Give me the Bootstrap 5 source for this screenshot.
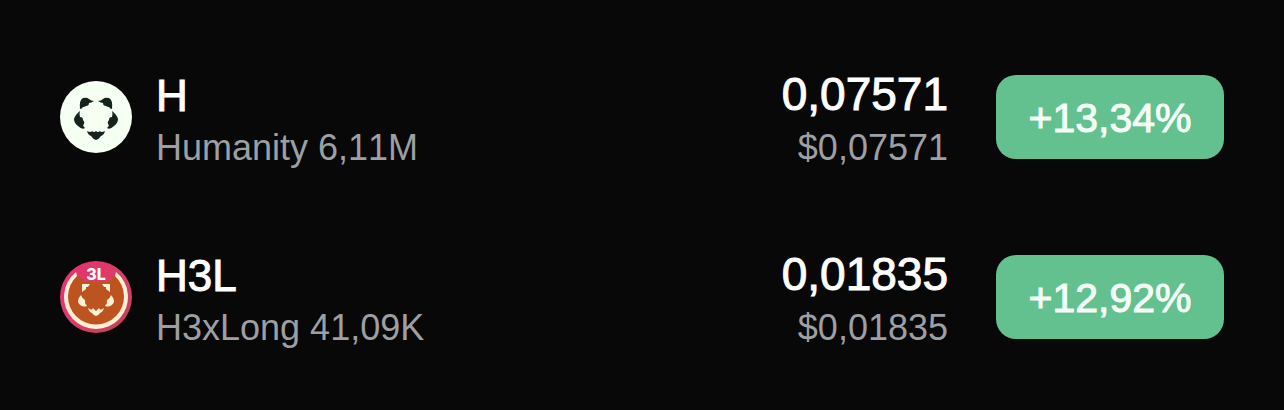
<!DOCTYPE html>
<html lang="en">
<head>
<meta charset="utf-8">
<meta name="viewport" content="width=device-width, initial-scale=1">
<title>Markets</title>
<link href="https://cdn.jsdelivr.net/npm/bootstrap@5.3.0/dist/css/bootstrap.min.css" rel="stylesheet">
<style>
body { background: #080808; font-family: "Liberation Sans", Arial, sans-serif; font-kerning: none; }
.market-list { padding: 27px 60px 0; }
.market-row { height: 180px; gap: 24px; }
.coin-logo { width: 72px; height: 72px; }
.coin-text { padding-top: 10px; }
.coin-symbol, .coin-price { color: #fff; -webkit-text-stroke: 1px #fff; }
.coin-symbol { font-size: 44px; line-height: 52px; }
.coin-price { font-size: 46px; line-height: 48px; padding-bottom: 4px; }
.coin-detail { color: #9e9fa3; font-size: 36px; line-height: 52px; }
.change-pill { width: 228px; height: 84px; margin-left: 24px; border-radius: 20px; background: #63c190; color: #f5fff8; font-size: 41px; line-height: 86px; -webkit-text-stroke: 1px #f5fff8; }
</style>
</head>
<body>
<main class="market-list">
  <div class="market-row d-flex align-items-center">
    <svg class="coin-logo flex-shrink-0" viewBox="0 0 72 72" aria-hidden="true">
      <circle cx="36" cy="36" r="36" fill="#f5fff2"/>
      <g fill="#14231b">
        <g id="half">
          <path d="M20 28Q19 19 23 17Q27 16 29 18Q31 20 34 20Q31 22 29 22Q29 25 26 25Q25 26 23 26Q22 28 20 28Z"/>
          <path d="M20 30Q19 33 20 36Q23 36 23 39Q25 41 24 43Q22 44 25 47Q22 49 18 45Q14 42 14 38Q15 34 20 30Z"/>
          <path d="M27 50Q31 52 32 50Q34 52 36 50V59Q33 58 31 55Q28 54 27 50Z"/>
        </g>
        <use href="#half" transform="matrix(-1 0 0 1 72 0)"/>
      </g>
    </svg>
    <div class="coin-text flex-grow-1">
      <div class="coin-symbol">H</div>
      <div class="coin-detail">Humanity 6,11M</div>
    </div>
    <div class="coin-text text-end">
      <div class="coin-price">0,07571</div>
      <div class="coin-detail">$0,07571</div>
    </div>
    <div class="change-pill flex-shrink-0 text-center">+13,34%</div>
  </div>
  <div class="market-row d-flex align-items-center">
    <svg class="coin-logo flex-shrink-0" viewBox="0 0 72 72" aria-hidden="true">
      <defs>
        <linearGradient id="rim" x1="0" y1="0" x2="1" y2="1">
          <stop offset="0" stop-color="#e5306f"/>
          <stop offset=".5" stop-color="#dc3d69"/>
          <stop offset="1" stop-color="#b94558"/>
        </linearGradient>
      </defs>
      <circle cx="36" cy="36" r="36" fill="url(#rim)"/>
      <path d="M17 14A30 30 0 1 0 55 14L47 21H25Z" fill="#bd5420"/>
      <path d="M16 11A32 32 0 1 0 56 11L55 15A28 28 0 1 1 17 15Z" fill="#fff0d5"/>
      <g fill="#fff0d5">
        <g id="mask">
          <path d="M22 31V23H30L28 26H26V28Z"/>
          <path d="M21 34Q22 37 24 38Q26 40 25 42L27 45Q24 46 22 45Q18 43 18 40Q18 37 21 34Z"/>
          <path d="M28 47Q32 50 33 47L36 50V55Q34 55 32 52Q29 51 28 47Z"/>
        </g>
        <use href="#mask" transform="matrix(-1 0 0 1 72 0)"/>
      </g>
      <text x="36" y="19" text-anchor="middle" font-family="Inter, sans-serif" font-size="16" font-weight="800" fill="#fff">3L</text>
    </svg>
    <div class="coin-text flex-grow-1">
      <div class="coin-symbol">H3L</div>
      <div class="coin-detail">H3xLong 41,09K</div>
    </div>
    <div class="coin-text text-end">
      <div class="coin-price">0,01835</div>
      <div class="coin-detail">$0,01835</div>
    </div>
    <div class="change-pill flex-shrink-0 text-center">+12,92%</div>
  </div>
</main>
<script src="https://cdn.jsdelivr.net/npm/bootstrap@5.3.0/dist/js/bootstrap.bundle.min.js"></script>
</body>
</html>
